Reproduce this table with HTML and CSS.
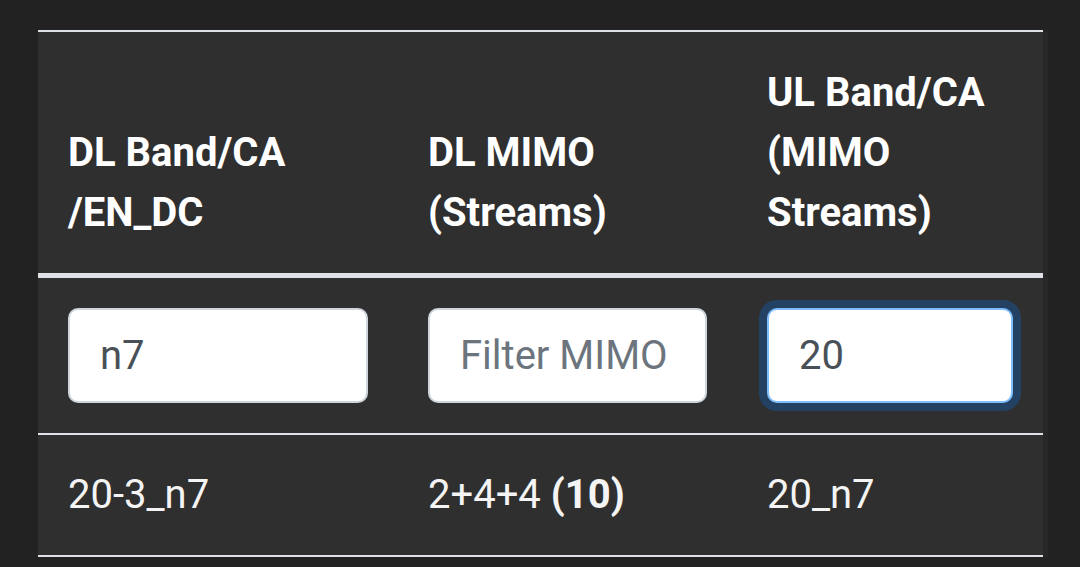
FILE: index.html
```html
<!DOCTYPE html>
<html lang="en">
<head>
<meta charset="utf-8">
<title>Band combos</title>
<link rel="stylesheet" href="styles.css">
</head>
<body>
<main class="page">
  <table class="combos">
    <thead>
      <tr class="head-row">
        <th class="col-dl">DL Band/CA<br>/EN_DC</th>
        <th class="col-mimo">DL MIMO<br>(Streams)</th>
        <th class="col-ul">UL Band/CA<br>(MIMO<br>Streams)</th>
      </tr>
    </thead>
    <tbody>
      <tr class="filter-row">
        <td><input class="filter" type="text" value="n7"></td>
        <td><input class="filter" type="text" placeholder="Filter MIMO"></td>
        <td><input class="filter is-focused" type="text" value="20"></td>
      </tr>
      <tr class="data-row">
        <td>20-3_n7</td>
        <td>2+4+4 <strong>(10)</strong></td>
        <td>20_n7</td>
      </tr>
    </tbody>
  </table>
</main>
</body>
</html>
```
FILE: styles.css
```css
html, body {
  margin: 0;
  padding: 0;
  background: #222222;
  height: 100%;
  overflow: hidden;
}

.page {
  padding: 30px 0 0 38px;
  font-family: Roboto, "Liberation Sans", sans-serif;
}

.combos {
  width: 1005px;
  border-collapse: collapse;
  background: #2f2f2f;
  color: #ffffff;
  font-size: 40px;
  line-height: 60px;
  box-shadow: 5px 0 0 #272727;
  table-layout: fixed;
}

.col-dl { width: 360px; }
.col-mimo { width: 339px; }
.col-ul { width: 306px; }

.combos th,
.combos td {
  box-sizing: border-box;
  padding: 30px;
  text-align: left;
  border-top: 2px solid #dee2e6;
}

.combos th {
  font-weight: 700;
  vertical-align: bottom;
  border-bottom: 5px solid #dee2e6;
  padding-top: 31px;
}

.combos td {
  vertical-align: top;
  font-weight: 400;
  color: #f4f4f4;
}

.combos tbody tr:first-child td {
  border-top: none;
}

.data-row td {
  border-bottom: 2px solid #dee2e6;
}

.combos strong {
  font-weight: 700;
}

.filter {
  display: block;
  box-sizing: border-box;
  width: 100%;
  height: 95px;
  margin: 0;
  padding: 0 30px;
  font-family: Roboto, "Liberation Sans", sans-serif;
  font-size: 40px;
  color: #495057;
  background: #ffffff;
  border: 2px solid #ced4da;
  border-radius: 10px;
  outline: none;
}

.filter::placeholder {
  color: #6c757d;
  opacity: 1;
}

.filter.is-focused {
  border-color: #80bdff;
  box-shadow: 0 0 0 8px rgba(0, 123, 255, 0.25);
}
```
